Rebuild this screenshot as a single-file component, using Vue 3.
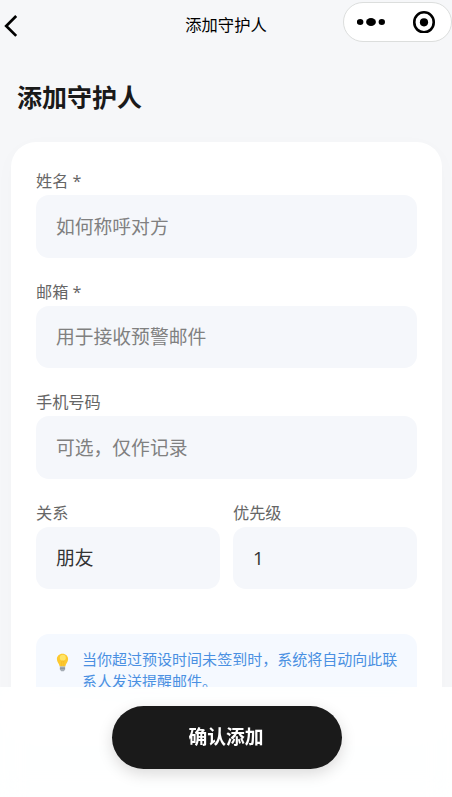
<script setup>
import { ref } from 'vue'

const form = ref({
  name: '',
  email: '',
  phone: '',
  relation: '朋友',
  priority: '1'
})

const fields = [
  { key: 'name', label: '姓名 *', placeholder: '如何称呼对方' },
  { key: 'email', label: '邮箱 *', placeholder: '用于接收预警邮件' },
  { key: 'phone', label: '手机号码', placeholder: '可选，仅作记录' }
]
</script>

<template>
  <div class="page">
    <header class="navbar">
      <svg class="back" width="16" height="24" viewBox="0 0 16 24">
        <path d="M13.2 2 3.2 12l10 9.9" fill="none" stroke="#000" stroke-width="2.7" />
      </svg>
      <span class="nav-title">添加守护人</span>
      <div class="capsule">
        <svg width="28" height="10" viewBox="0 0 28 10">
          <ellipse cx="3.1" cy="5" rx="3.3" ry="3" />
          <ellipse cx="14" cy="5" rx="4.9" ry="4" />
          <ellipse cx="24.8" cy="5" rx="3.2" ry="3" />
        </svg>
        <svg width="22" height="22" viewBox="0 0 22 22">
          <rect x="1.3" y="1.3" width="19.4" height="20" rx="9.7" fill="none" stroke="#000" stroke-width="2.6" />
          <circle cx="11" cy="11.3" r="4.1" />
        </svg>
      </div>
    </header>

    <h1 class="title">添加守护人</h1>

    <main class="card">
      <div v-for="field in fields" :key="field.key" class="field">
        <label class="label" :for="field.key">{{ field.label }}</label>
        <input
          :id="field.key"
          v-model="form[field.key]"
          class="input"
          :placeholder="field.placeholder"
        />
      </div>
      <div class="row">
        <div class="field">
          <span class="label">关系</span>
          <div class="input">{{ form.relation }}</div>
        </div>
        <div class="field">
          <span class="label">优先级</span>
          <div class="input">{{ form.priority }}</div>
        </div>
      </div>
      <div class="tip">
        <svg class="bulb" width="13" height="19" viewBox="0 0 13 19">
          <path
            d="M6.5.8C3.2.8.9 3.2.9 6.3c0 2.8 2.1 4 2.8 7.2h5.6c.7-3.2 2.8-4.4 2.8-7.2C12.1 3.2 9.8.8 6.5.8z"
            fill="#fdc92f"
          />
          <circle cx="6.8" cy="4.8" r="3" fill="#ffe567" />
          <path
            d="M5 7.5l1 1.2.8-1.2.8 1.2.9-1.2M5.6 8.5v4.5M7.7 8.5v4.5"
            fill="none"
            stroke="#f0b429"
            stroke-width=".5"
          />
          <path d="M3.9 13.5h5.2v3l-1.3 1.8H5.2l-1.3-1.8z" fill="#a5adb4" />
          <path d="M3.9 15.3h5.2" stroke="#7e8a92" stroke-width=".7" />
        </svg>
        <p class="tip-text">当你超过预设时间未签到时，系统将自动向此联系人发送提醒邮件。</p>
      </div>
    </main>

    <footer class="footer">
      <button class="submit">确认添加</button>
    </footer>
  </div>
</template>

<style>
body {
  background: #f6f7f9;
}
</style>

<style scoped>
.page {
  height: 797px;
  overflow: hidden;
  background: #f6f7f9;
  font-family: 'Open Sans', 'Noto Sans CJK SC', sans-serif;
}

.navbar {
  display: grid;
  grid-template-columns: 109px 1fr 109px;
  height: 50px;
}

.back {
  margin: 14px 0 0 3px;
}

.nav-title {
  text-align: center;
  font-size: 16.3px;
  line-height: 50px;
  color: #000;
}

.capsule {
  display: flex;
  align-items: center;
  justify-content: space-between;
  box-sizing: border-box;
  width: 109px;
  height: 40px;
  margin-top: 2px;
  padding: 0 16px 0 13px;
  border: 1px solid #dcdedd;
  border-radius: 20px;
  background: #fff;
}

.title {
  margin: 28px 0 0 17px;
  font-size: 25px;
  line-height: 38px;
  font-weight: 700;
  color: #1a1a1a;
}

.card {
  box-sizing: border-box;
  margin: 26px 10px 0 11px;
  padding: 25px;
  border-radius: 25px;
  background: #fff;
  box-shadow: 0 5px 25px rgba(0, 0, 0, 0.02);
}

.field {
  margin-bottom: 20px;
}

.label {
  display: block;
  height: 28px;
  font-size: 16.2px;
  line-height: 29px;
  color: #666;
}

.input {
  display: block;
  box-sizing: border-box;
  width: 100%;
  height: 62.5px;
  padding: 0 20px;
  border: none;
  outline: none;
  border-radius: 13px;
  background: #f5f7fb;
  font-family: inherit;
  font-size: 18.8px;
  line-height: 62px;
  color: #333;
}

input.input {
  padding-top: 1px;
  line-height: normal;
}

.input::placeholder {
  color: #808080;
  opacity: 1;
}

.row {
  display: grid;
  grid-template-columns: 1fr 1fr;
  gap: 13px;
}

.tip {
  display: flex;
  margin-top: 25px;
  padding: 14px 19px 16px 20px;
  border-radius: 13px;
  background: #f5f9ff;
}

.bulb {
  flex: none;
  margin: 5px 13px 0 0;
}

.tip-text {
  margin: 0;
  font-size: 15.03px;
  line-height: 22px;
  color: #4a90e2;
}

.footer {
  position: fixed;
  right: 0;
  bottom: 0;
  left: 0;
  display: flex;
  justify-content: center;
  box-sizing: border-box;
  height: 110px;
  padding: 19px 0 0 2px;
  background: rgba(255, 255, 255, 0.9);
  backdrop-filter: blur(12px);
}

.submit {
  width: 230px;
  height: 63px;
  padding: 0 8px 3px 6px;
  border: none;
  border-radius: 32px;
  background: #1a1a1a;
  box-shadow: 0 5px 15px rgba(0, 0, 0, 0.15);
  font-family: inherit;
  font-size: 18.8px;
  font-weight: 700;
  color: #fff;
}
</style>
